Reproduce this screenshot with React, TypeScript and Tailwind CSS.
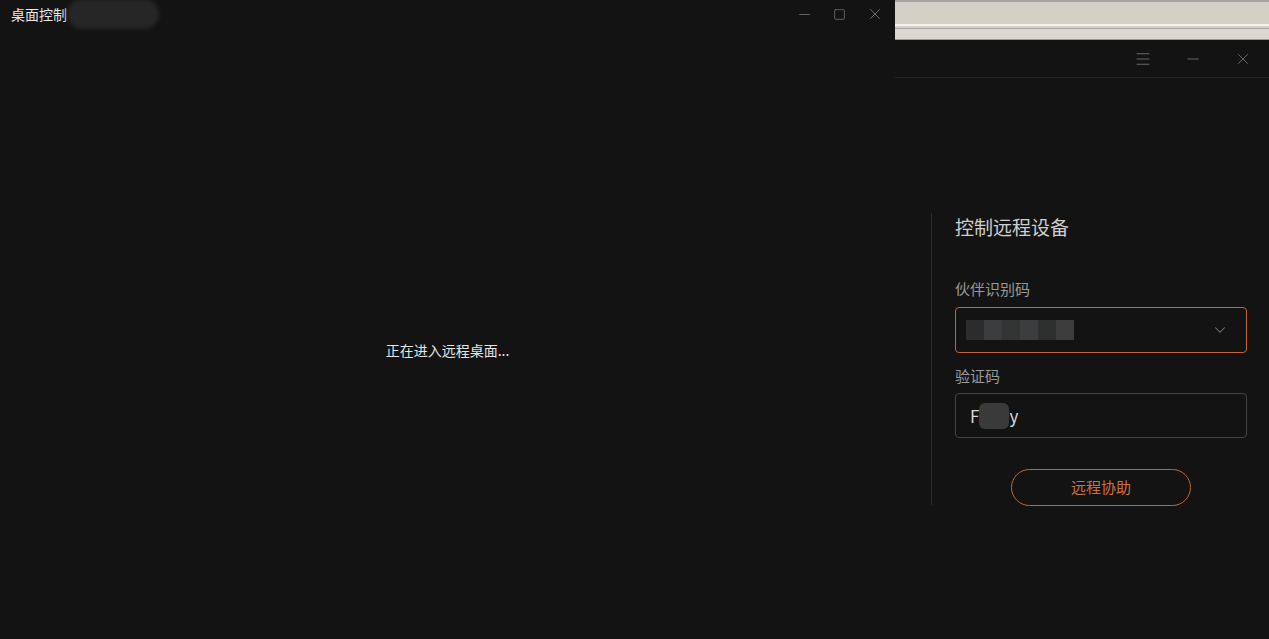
import React from 'react';
import { Minus, Square, X, Menu, ChevronDown } from 'lucide-react';

const font = { fontFamily: '"Microsoft YaHei", "Noto Sans CJK SC", "Noto Sans", sans-serif' };

function Mosaic({ cells, className }: { cells: string[]; className?: string }) {
  return (
    <div className={`flex ${className ?? ''}`}>
      {cells.map((c, i) => (
        <div key={i} className="h-full w-[18px]" style={{ backgroundColor: c }} />
      ))}
    </div>
  );
}

export default function App() {
  return (
    <div className="flex h-[639px] w-[1269px] overflow-hidden bg-[#131313] text-white" style={font}>
      {/* left window */}
      <div className="flex w-[895px] flex-col">
        <div className="flex h-[28px] items-center">
          <div className="relative flex items-center pl-[11px]">
            <span className="text-[14px] text-[#e8e8e8]">桌面控制</span>
            <div className="h-[30px] w-[92px] rounded-full bg-[#262626] blur-[2px]" />
          </div>
          <div className="ml-auto flex items-center gap-[20px] pr-[11px] text-[#707070]">
            <Minus className="h-[17px] w-[17px]" strokeWidth={1.2} />
            <Square className="h-[13px] w-[13px]" strokeWidth={1.5} />
            <X className="h-[18px] w-[18px]" strokeWidth={1.2} />
          </div>
        </div>
        <div className="flex flex-1 justify-center pt-[312px]">
          <span className="text-[14px] text-[#e6e6e6]">正在进入远程桌面...</span>
        </div>
      </div>

      {/* right window */}
      <div className="flex flex-1 flex-col">
        <div className="flex h-[40px] flex-col border-b border-[#9a9894] bg-[#d4d0c8]">
          <div className="h-[2px] bg-[#a8a6a2]" />
          <div className="h-[22px]" />
          <div className="h-[2px] bg-[#f4f2ee]" />
          <div className="h-[2px]" />
          <div className="h-[1px] bg-[#a8a6a2]" />
          <div className="flex-1 bg-[#dcd8d0]" />
        </div>
        <div className="flex h-[38px] items-center justify-end gap-[32px] border-b border-[#242424] pr-[17px] text-[#6a6a6a]">
          <Menu className="h-[18px] w-[18px]" strokeWidth={1.3} />
          <Minus className="h-[18px] w-[18px]" strokeWidth={1.3} />
          <X className="h-[18px] w-[18px]" strokeWidth={1.3} />
        </div>
        <div className="flex pl-[36px] pt-[135px]">
          <div className="h-[292px] border-l border-[#2c2c2c] pl-[23px]">
            <div className="flex w-[292px] flex-col">
              <div className="text-[19px] leading-[28px] text-[#cfcfcf]">控制远程设备</div>
              <div className="mt-[38px] text-[15px] leading-[20px] text-[#9a9a9a]">伙伴识别码</div>
              <div className="mt-[8px] flex h-[46px] items-center rounded-[4px] border border-[#c86238] pl-[10px] pr-[17px]">
                <Mosaic className="h-[20px]" cells={['#2c2c2c', '#3a3c3e', '#333535', '#3b3d3f', '#2e2f2f', '#3c3c3c']} />
                <ChevronDown className="ml-auto h-[18px] w-[18px] text-[#7a7a7a]" strokeWidth={1.4} />
              </div>
              <div className="mt-[13px] text-[15px] leading-[20px] text-[#9a9a9a]">验证码</div>
              <div className="mt-[7px] flex h-[45px] items-center rounded-[4px] border border-[#444444] pl-[14px]">
                <span className="text-[17px] text-[#d8d8d8]">F</span>
                <div className="h-[26px] w-[30px] rounded-[6px] bg-[#3a3a3a]" />
                <span className="text-[17px] text-[#d8d8d8]">y</span>
              </div>
              <div className="mt-[31px] flex justify-center">
                <button className="flex h-[37px] w-[180px] items-center justify-center rounded-full border-[1.5px] border-[#c86238] text-[15px] text-[#d0703f]">
                  远程协助
                </button>
              </div>
            </div>
          </div>
        </div>
      </div>
    </div>
  );
}
